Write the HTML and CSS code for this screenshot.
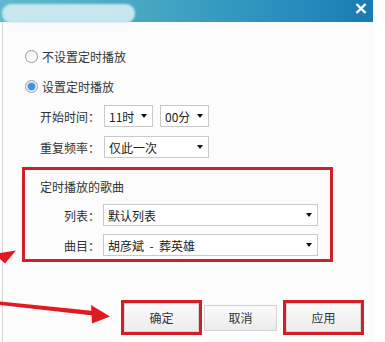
FILE: index.html
```html
<!DOCTYPE html>
<html lang="zh-CN">
<head>
<meta charset="UTF-8">
<title>定时播放</title>
<link rel="stylesheet" href="styles.css">
</head>
<body>
<div class="window">
    <div class="titlebar">
        <div class="title-blur"></div>
        <svg class="close" width="12" height="11" viewBox="0 0 12 11">
            <path d="M1.5 1 L10.5 10 M10.5 1 L1.5 10" stroke="#fff" stroke-width="2.4" fill="none"/>
        </svg>
    </div>
    <div class="dialog">
        <div class="radio-row">
            <span class="radio"></span>
            <span>不设置定时播放</span>
        </div>
        <div class="radio-row">
            <span class="radio checked"></span>
            <span>设置定时播放</span>
        </div>
        <div class="field-row first">
            <label class="label">开始时间：</label>
            <div class="select small"><span>11时</span><i class="caret"></i></div>
            <div class="select small"><span>00分</span><i class="caret"></i></div>
        </div>
        <div class="field-row">
            <label class="label">重复频率：</label>
            <div class="select medium"><span>仅此一次</span><i class="caret"></i></div>
        </div>

        <div class="song-group">
            <div class="group-title">定时播放的歌曲</div>
            <div class="group-row">
                <label class="group-label">列表：</label>
                <div class="select wide"><span>默认列表</span><i class="caret"></i></div>
            </div>
            <div class="group-row">
                <label class="group-label">曲目：</label>
                <div class="select wide"><span class="song">胡彦斌  -  葬英雄</span><i class="caret"></i></div>
            </div>
        </div>

        <div class="buttons">
            <div class="mark"><button class="btn">确定</button></div>
            <button class="btn plain">取消</button>
            <div class="mark"><button class="btn">应用</button></div>
        </div>
    </div>
</div>

<!-- red annotation arrows drawn over the screenshot -->
<svg class="notes" width="385" height="342" viewBox="0 0 385 342">
    <polygon points="0,253 16,250.5 5,263.5 0,259" fill="#e01a1f"/>
    <polygon points="0,301.5 94,311 93,315.5 0,305" fill="#e01a1f"/>
    <polygon points="91,305 110,316.5 92,323.5" fill="#e01a1f"/>
</svg>
</body>
</html>
```

FILE: styles.css
```css
*{
    margin: 0;
    padding: 0;
    box-sizing: border-box;
}
body{
    position: relative;
    width: 385px;
    height: 342px;
    overflow: hidden;
    background: #fff;
    font-family: "Noto Sans CJK SC", "Liberation Sans", sans-serif;
    font-size: 12px;
    color: #333;
}
.window{
    width: 373px;
}
.titlebar{
    position: relative;
    height: 22px;
    display: flex;
    align-items: center;
    justify-content: flex-end;
    padding-right: 6px;
    background: linear-gradient(to right, #62b9c9 0%, #45a6c3 40%, #2a8fbd 75%, #1a7ab2 100%);
}
.title-blur{
    position: absolute;
    left: 2px;
    top: 4px;
    width: 133px;
    height: 19px;
    border-radius: 9px;
    background: rgba(208, 236, 242, 0.92);
    filter: blur(1px);
}
.close{
    margin-top: -6px;
}
.dialog{
    height: 320px;
    margin-left: 2px;
    border-left: 1px solid #d6d6d6;
    background: #fcfcfc;
    padding-top: 24px;
}
.radio-row{
    height: 20px;
    display: flex;
    align-items: center;
    gap: 4px;
    padding-left: 22px;
    margin-bottom: 10px;
}
.radio{
    width: 13px;
    height: 13px;
    border-radius: 50%;
    border: 1px solid #9c9c9c;
    background: linear-gradient(#f0f0f0, #fff);
    display: flex;
    align-items: center;
    justify-content: center;
}
.radio.checked::after{
    content: "";
    width: 7px;
    height: 7px;
    border-radius: 50%;
    background: #3d8fe0;
    box-shadow: 0 0 0 1px #a9cdf2;
}
.field-row{
    height: 22px;
    display: flex;
    align-items: center;
    padding-left: 37px;
    margin-bottom: 9px;
}
.field-row.first{
    margin-top: -1px;
}
.field-row .select + .select{
    margin-left: 7px;
}
.label{
    width: 64px;
    color: #333;
}
.select{
    height: 22px;
    display: flex;
    align-items: center;
    justify-content: space-between;
    padding: 0 5px 0 4px;
    border: 1px solid #c9c9c9;
    background: #fff;
    color: #222;
}
.select.small{
    width: 49px;
}
.select.medium{
    width: 105px;
}
.select.wide{
    width: 215px;
}
.song{
    white-space: pre;
}
.caret{
    width: 0;
    height: 0;
    border-left: 3px solid transparent;
    border-right: 3px solid transparent;
    border-top: 4px solid #111;
}
.song-group{
    width: 311px;
    height: 95px;
    margin: 5px 0 0 19px;
    border: 3px solid #d21f27;
    padding: 8px 0 0 15px;
}
.group-title{
    height: 17px;
    line-height: 17px;
    margin-bottom: 9px;
}
.group-row{
    height: 22px;
    display: flex;
    align-items: center;
    margin-bottom: 8px;
}
.group-label{
    width: 63px;
    text-align: right;
    padding-right: 3px;
}
.buttons{
    display: flex;
    align-items: center;
    padding-left: 118px;
    margin-top: 38px;
    gap: 2px;
}
.mark{
    border: 3px solid #d21f27;
    height: 35px;
    width: 81px;
    padding: 0;
}
.mark + .plain{
    margin-right: 4px;
}
.btn{
    width: 75px;
    height: 29px;
    border: 1px solid #d4d4d4;
    background: linear-gradient(#fafafa, #ececec);
    font-family: "Noto Sans CJK SC", "Liberation Sans", sans-serif;
    font-size: 12px;
    color: #333;
}
.btn.plain{
    width: 73px;
    height: 26px;
}
.notes{
    position: absolute;
    left: 0;
    top: 0;
    pointer-events: none;
}
```
